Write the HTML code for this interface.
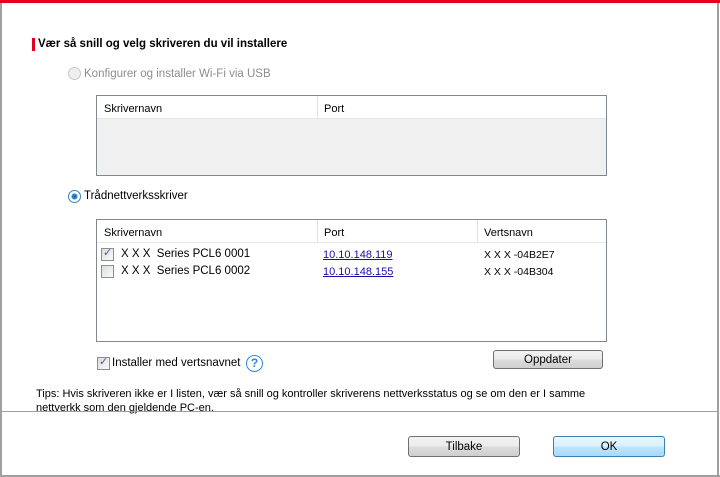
<!DOCTYPE html>
<html><head><style>
*{margin:0;padding:0;box-sizing:border-box}
body{width:720px;height:477px;background:#fff;font-family:"Liberation Sans",sans-serif;font-size:11px;color:#000;position:relative;overflow:hidden}
.a{position:absolute;white-space:nowrap}
.list{position:absolute;border:1px solid #828790;background:#fff}
.hdr{position:absolute;left:0;right:0;top:0;height:23px;background:#fff;border-bottom:1px solid #e5e5e5}
.hdr span{position:absolute;top:7px}
.sep{position:absolute;top:0;height:23px;width:1px;background:#e3e3e3}
.btn{position:absolute;border:1px solid #707070;border-radius:3px;background:linear-gradient(#f2f2f2 0,#ebebeb 50%,#dddddd 50%,#cfcfcf 100%);display:flex;align-items:center;justify-content:center;font-size:11.5px}
.cb{position:absolute;width:13px;height:13px;border:1px solid #8e8f8f;background:linear-gradient(135deg,#dcdcdc,#fafafa)}
.lk{color:#1a0dab;text-decoration:underline}
</style></head><body>
<div class="a" style="left:0;top:0;width:720px;height:3px;background:#e3001b"></div>
<div class="a" style="left:0;top:3px;width:2px;height:474px;background:#a0a0a0"></div>
<div class="a" style="left:717px;top:3px;width:2px;height:474px;background:#a0a0a0"></div>
<div class="a" style="left:0;top:475px;width:720px;height:2px;background:#a0a0a0"></div>
<div class="a" style="left:32px;top:38px;width:3px;height:13px;background:#e3001b"></div>
<div class="a" style="left:38px;top:38px;font-weight:bold;font-size:11.5px">Vær så snill og velg skriveren du vil installere</div>

<div class="a" style="left:68px;top:67px;width:13px;height:13px;border-radius:50%;border:1px solid #c8c8c8;background:#eee"></div>
<div class="a" style="left:84px;top:68px;color:#8d8d8d;font-size:11.5px">Konfigurer og installer Wi-Fi via USB</div>
<div class="list" style="left:96px;top:95px;width:511px;height:81px;background:#f0f0f0">
<div class="hdr"><span style="left:7px">Skrivernavn</span><span style="left:227px">Port</span></div>
<div class="sep" style="left:220px"></div>
</div>

<div class="a" style="left:68px;top:190px;width:13px;height:13px;border-radius:50%;border:1px solid #3c7fb1;background:radial-gradient(circle,#1a5fb4 0,#2d8ae0 2.5px,#fff 3.5px)"></div>
<div class="a" style="left:84px;top:190px;font-size:11.5px">Trådnettverksskriver</div>
<div class="list" style="left:96px;top:219px;width:511px;height:123px">
<div class="hdr"><span style="left:7px">Skrivernavn</span><span style="left:227px">Port</span><span style="left:387px">Vertsnavn</span></div>
<div class="sep" style="left:220px"></div><div class="sep" style="left:380px"></div>
</div>
<div class="cb" style="left:101px;top:248px"></div>
<div class="a" style="left:103px;top:246px;color:#4a5f8f;font-size:11px">✓</div>
<div class="a" style="left:121px;top:248px;font-size:11.5px">X X X &nbsp;Series PCL6 0001</div>
<div class="a lk" style="left:323px;top:249px">10.10.148.119</div>
<div class="a" style="left:484px;top:249px;font-size:10.5px">X X X -04B2E7</div>
<div class="cb" style="left:101px;top:265px"></div>
<div class="a" style="left:121px;top:265px;font-size:11.5px">X X X &nbsp;Series PCL6 0002</div>
<div class="a lk" style="left:323px;top:266px">10.10.148.155</div>
<div class="a" style="left:484px;top:266px;font-size:10.5px">X X X -04B304</div>

<div class="cb" style="left:97px;top:357px"></div>
<div class="a" style="left:99px;top:355px;color:#4a5f8f">✓</div>
<div class="a" style="left:112px;top:357px;font-size:11.5px">Installer med vertsnavnet</div>
<div class="a" style="left:246px;top:355px;width:17px;height:17px;border-radius:50%;border:1.5px solid #2a8ae0;color:#2a8ae0;text-align:center;font-size:12px;line-height:14px;font-weight:bold">?</div>
<div class="btn" style="left:493px;top:350px;width:110px;height:19px">Oppdater</div>

<div class="a" style="left:36px;top:387px;font-size:11px;line-height:14px">Tips: Hvis skriveren ikke er I listen, vær så snill og kontroller skriverens nettverksstatus og se om den er I samme<br>nettverkk som den gjeldende PC-en.</div>
<div class="a" style="left:2px;top:411px;width:715px;height:1px;background:#a0a0a0"></div>
<div class="btn" style="left:408px;top:436px;width:112px;height:21px">Tilbake</div>
<div class="btn" style="left:553px;top:436px;width:112px;height:21px;border-color:#3c7fb1;background:linear-gradient(#eaf6fd 0,#d9f0fc 50%,#bee6fd 50%,#a7d9f5 100%)">OK</div>
</body></html>
